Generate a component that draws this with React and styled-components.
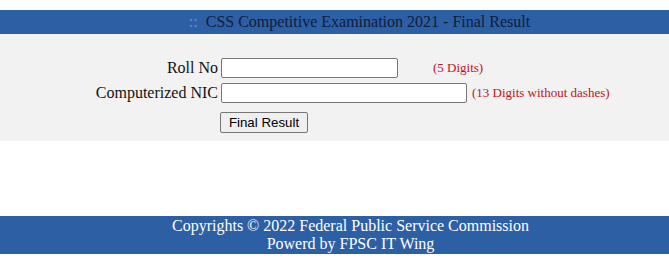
import React, { useState } from 'react';
import styled, { createGlobalStyle } from 'styled-components';

const GlobalStyle = createGlobalStyle`
  html, body {
    margin: 0;
    padding: 0;
    background: #ffffff;
    font-family: "Liberation Serif", "Times New Roman", serif;
  }
`;

const Page = styled.div`
  padding-top: 10px;
  width: 669px;
`;

const TitleBar = styled.div`
  background: #2d5fa4;
  height: 24px;
  display: flex;
  align-items: center;
  justify-content: center;
  padding-left: 50px;
  font-size: 16px;
  color: #0f1d3a;
`;

const Dots = styled.span`
  color: #6f8fc4;
  margin-right: 8px;
`;

const FormPanel = styled.div`
  background: #f2f2f2;
  height: 107px;
  padding-top: 24px;
  box-sizing: border-box;
`;

const FormGrid = styled.div`
  display: grid;
  grid-template-columns: 218px auto;
  column-gap: 3px;
  row-gap: 5px;
  align-items: center;
`;

const Label = styled.label`
  text-align: right;
  font-size: 16px;
  color: #111;
`;

const Field = styled.div`
  display: flex;
  align-items: center;
`;

const TextInput = styled.input`
  width: ${p => p.$w}px;
  height: 20px;
  box-sizing: border-box;
  border: 1px solid #767676;
  border-radius: 2px;
  background: #fff;
  padding: 1px 3px;
  font-size: 13px;
  margin: 0;
`;

const Hint = styled.span`
  color: #c0141c;
  font-size: 13px;
  margin-left: ${p => p.$gap}px;
`;

const ButtonRow = styled.div`
  grid-column: 2;
  margin-top: 4px;
`;

const SubmitButton = styled.button`
  width: 88px;
  height: 21px;
  margin-left: -1px;
  font-family: "Liberation Sans", Arial, sans-serif;
  font-size: 13.3px;
  color: #000;
  background: #efefef;
  border: 1px solid #767676;
  border-radius: 2px;
  padding: 0;
`;

const Spacer = styled.div`
  height: 75px;
`;

const Footer = styled.div`
  background: #2d5fa4;
  height: 38px;
  display: flex;
  flex-direction: column;
  align-items: center;
  justify-content: center;
  padding-left: 32px;
  color: #ffffff;
  font-size: 16px;
  line-height: 18px;
`;

export default function App() {
  const [roll, setRoll] = useState('');
  const [nic, setNic] = useState('');

  return (
    <Page>
      <GlobalStyle />
      <TitleBar>
        <Dots>::</Dots>
        CSS Competitive Examination 2021 - Final Result
      </TitleBar>
      <FormPanel>
        <FormGrid>
          <Label>Roll No</Label>
          <Field>
            <TextInput $w={177} value={roll} onChange={e => setRoll(e.target.value)} />
            <Hint $gap={35}>(5 Digits)</Hint>
          </Field>
          <Label>Computerized NIC</Label>
          <Field>
            <TextInput $w={246} value={nic} onChange={e => setNic(e.target.value)} />
            <Hint $gap={5}>(13 Digits without dashes)</Hint>
          </Field>
          <ButtonRow>
            <SubmitButton type="button">Final Result</SubmitButton>
          </ButtonRow>
        </FormGrid>
      </FormPanel>
      <Spacer />
      <Footer>
        <div>Copyrights © 2022 Federal Public Service Commission</div>
        <div>Powerd by FPSC IT Wing</div>
      </Footer>
    </Page>
  );
}
